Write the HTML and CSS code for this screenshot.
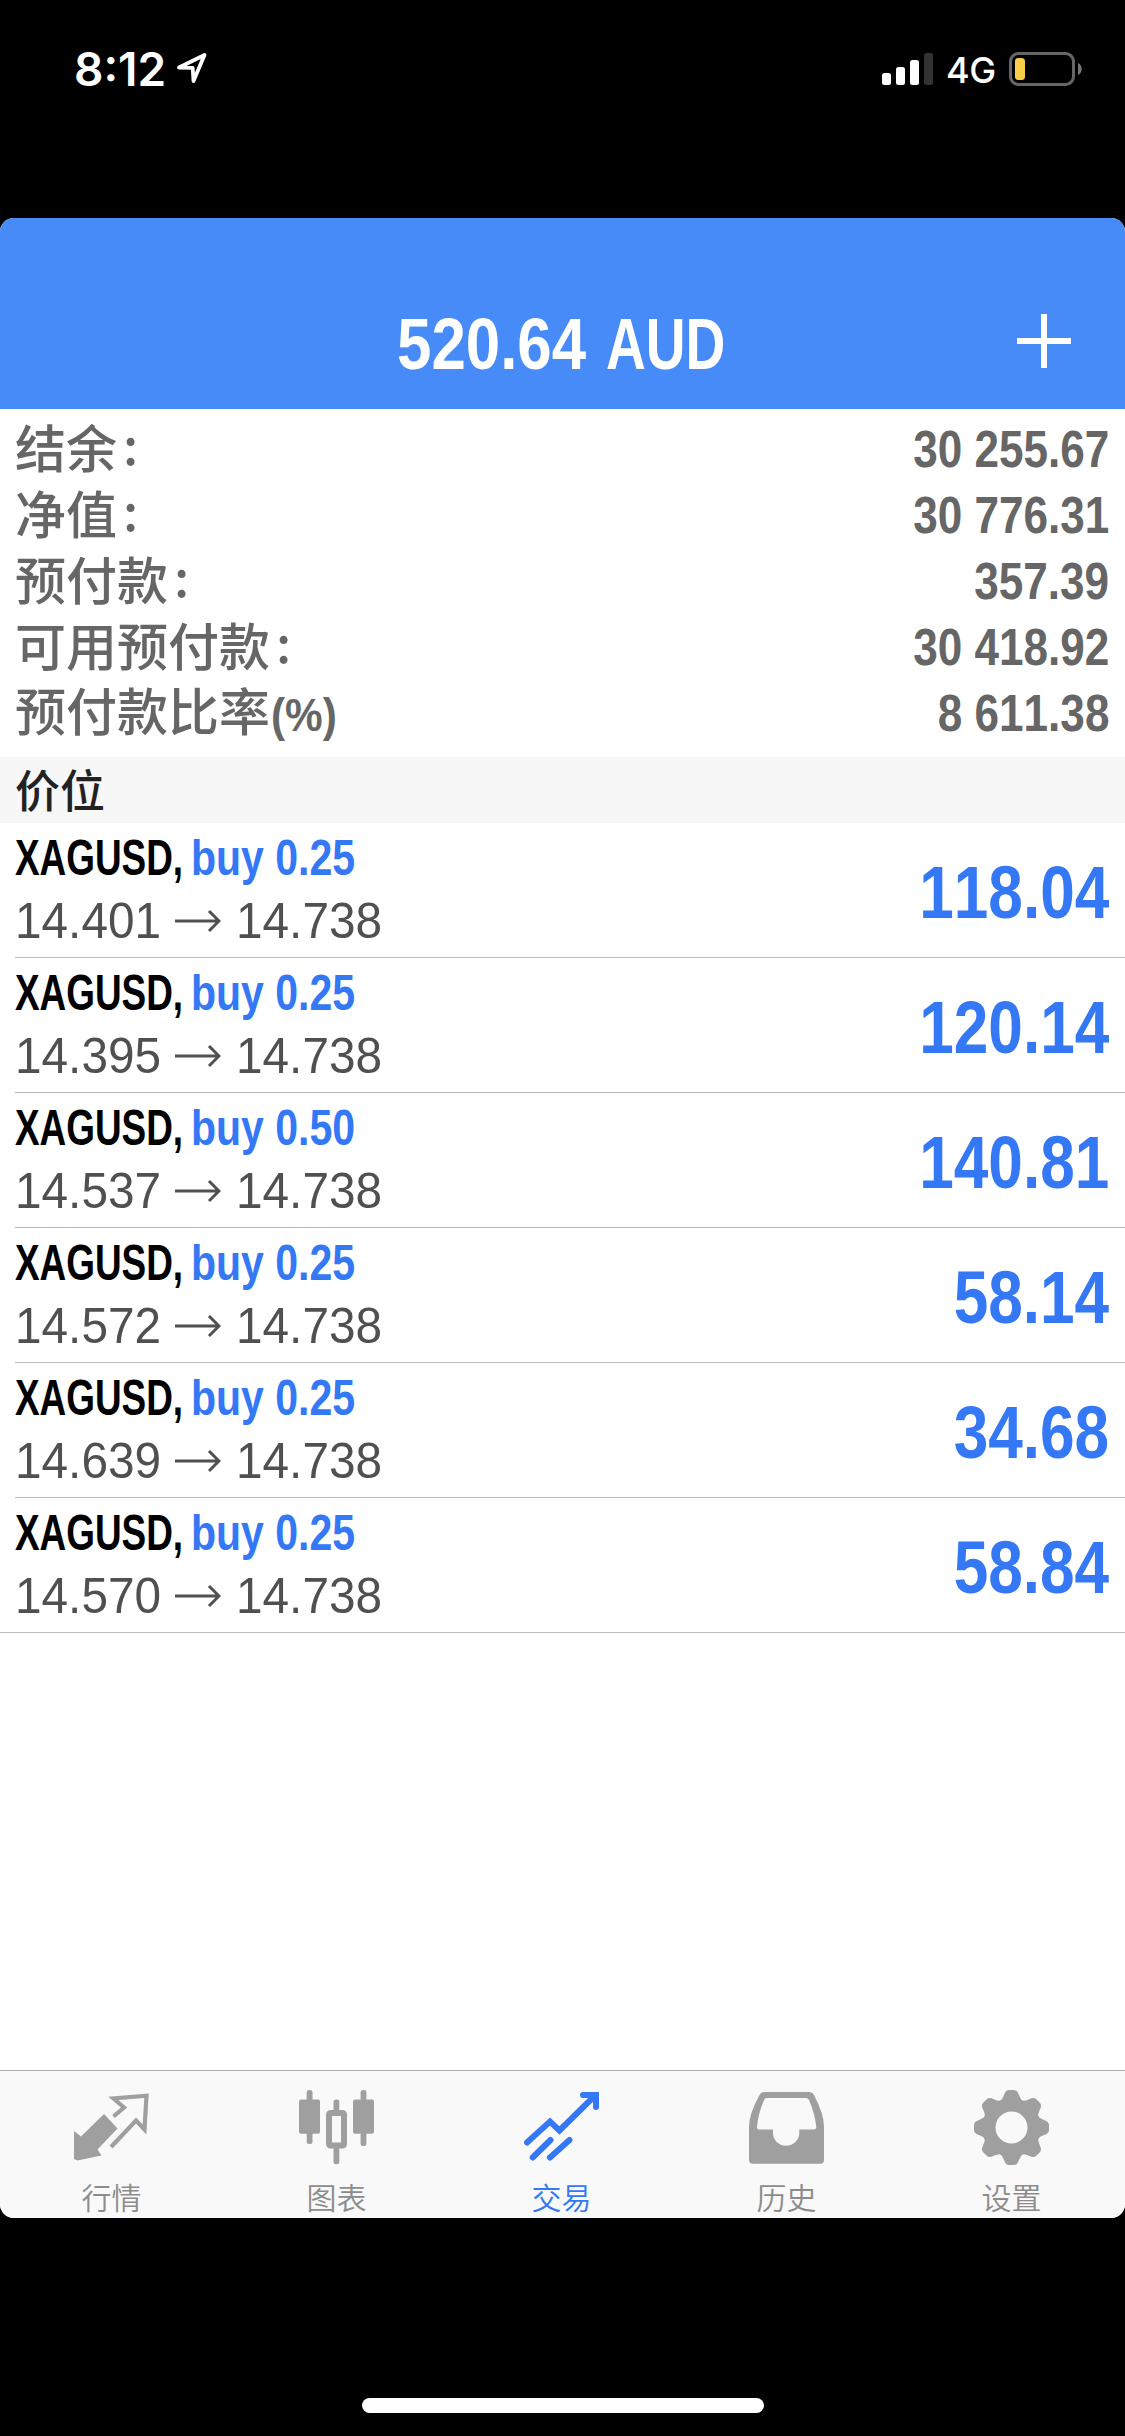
FILE: index.html
```html
<!DOCTYPE html>
<html lang="zh-CN">
<head>
<meta charset="utf-8">
<title>交易</title>
<link rel="stylesheet" href="styles.css">
</head>
<body>
<div class="status">
  <span class="time">8:12</span>
  <svg class="locate" width="32" height="32" viewBox="0 0 32 32"><path d="M3 15.500 28.500 3 17.500 29 16.700 15.800Z" fill="none" stroke="#fff" stroke-width="3.8" stroke-linejoin="round"/></svg>
  <svg class="signal" width="52" height="34" viewBox="0 0 52 34"><rect x="0" y="21" width="9" height="12" rx="2.5" fill="#fff"/><rect x="14" y="15" width="9" height="18" rx="2.5" fill="#fff"/><rect x="28" y="8" width="9" height="25" rx="2.5" fill="#fff"/><rect x="42" y="1" width="9" height="32" rx="2.5" fill="#333"/></svg>
  <span class="net">4G</span>
  <svg class="battery" width="74" height="34" viewBox="0 0 74 34"><rect x="1.5" y="1.5" width="63" height="31" rx="8" fill="none" stroke="#666" stroke-width="3"/><rect x="6" y="6" width="10" height="22" rx="3.5" fill="#f9cf4a"/><path d="M69 11c5 2 5 10 0 12z" fill="#777"/></svg>
</div>
<div class="app">
  <header class="header">
    <h1 class="title"><span class="amount cond">520.64</span> <span class="currency cond">AUD</span></h1>
    <svg class="plus" width="54" height="54" viewBox="0 0 54 54"><path d="M0 27H54M27 0V54" stroke="#fff" stroke-width="6"/></svg>
  </header>
  <dl class="account">
    <div class="line"><dt>结余<span class="colon">:</span></dt><dd class="cond">30 255.67</dd></div>
    <div class="line"><dt>净值<span class="colon">:</span></dt><dd class="cond">30 776.31</dd></div>
    <div class="line"><dt>预付款<span class="colon">:</span></dt><dd class="cond">357.39</dd></div>
    <div class="line"><dt>可用预付款<span class="colon">:</span></dt><dd class="cond">30 418.92</dd></div>
    <div class="line"><dt>预付款比率<span class="pct">(%)</span></dt><dd class="cond">8 611.38</dd></div>
  </dl>
  <h2 class="section">价位</h2>
  <ul class="list">
    <li class="row"><div class="deal"><div class="name"><span class="symbol cond">XAGUSD,</span><span class="side cond">buy 0.25</span></div><div class="price"><span>14.401</span><svg width="46" height="24" viewBox="0 0 46 24"><path d="M0 12H44M34 2 44 12 34 22"/></svg><span>14.738</span></div></div><div class="profit cond">118.04</div></li>
    <li class="row"><div class="deal"><div class="name"><span class="symbol cond">XAGUSD,</span><span class="side cond">buy 0.25</span></div><div class="price"><span>14.395</span><svg width="46" height="24" viewBox="0 0 46 24"><path d="M0 12H44M34 2 44 12 34 22"/></svg><span>14.738</span></div></div><div class="profit cond">120.14</div></li>
    <li class="row"><div class="deal"><div class="name"><span class="symbol cond">XAGUSD,</span><span class="side cond">buy 0.50</span></div><div class="price"><span>14.537</span><svg width="46" height="24" viewBox="0 0 46 24"><path d="M0 12H44M34 2 44 12 34 22"/></svg><span>14.738</span></div></div><div class="profit cond">140.81</div></li>
    <li class="row"><div class="deal"><div class="name"><span class="symbol cond">XAGUSD,</span><span class="side cond">buy 0.25</span></div><div class="price"><span>14.572</span><svg width="46" height="24" viewBox="0 0 46 24"><path d="M0 12H44M34 2 44 12 34 22"/></svg><span>14.738</span></div></div><div class="profit cond">58.14</div></li>
    <li class="row"><div class="deal"><div class="name"><span class="symbol cond">XAGUSD,</span><span class="side cond">buy 0.25</span></div><div class="price"><span>14.639</span><svg width="46" height="24" viewBox="0 0 46 24"><path d="M0 12H44M34 2 44 12 34 22"/></svg><span>14.738</span></div></div><div class="profit cond">34.68</div></li>
    <li class="row"><div class="deal"><div class="name"><span class="symbol cond">XAGUSD,</span><span class="side cond">buy 0.25</span></div><div class="price"><span>14.570</span><svg width="46" height="24" viewBox="0 0 46 24"><path d="M0 12H44M34 2 44 12 34 22"/></svg><span>14.738</span></div></div><div class="profit cond">58.84</div></li>
  </ul>
  <nav class="tabs">
    <a class="tab"><svg width="75" height="75" viewBox="0 0 75 75"><path d="M30 24 43.5 38.5 23.5 59.5 27.5 65.5 3.5 70.5 0 69V41L7 46.5Z" fill="currentColor"/><path d="M39.5 26.500 50 17.500 39.500 8.500 72.500 5.700 70.500 39.500 62 30.500 37 57" fill="none" stroke="currentColor" stroke-width="4.2"/></svg><span>行情</span></a>
    <a class="tab"><svg width="75" height="75" viewBox="0 0 75 75" fill="currentColor"><rect x="7.7" y="0" width="5.8" height="54" rx="2.5"/><rect x="0" y="9.5" width="21" height="34.3" rx="2"/><rect x="34.5" y="9.5" width="5.8" height="14" rx="2.5"/><rect x="34.5" y="57" width="5.8" height="17.3" rx="2.5"/><rect x="30" y="23" width="15" height="32.5" rx="1.5" fill="none" stroke="currentColor" stroke-width="6"/><rect x="61.6" y="0" width="5.8" height="56" rx="2.5"/><rect x="54" y="9.5" width="21" height="34.3" rx="2"/></svg><span>图表</span></a>
    <a class="tab active"><svg width="75" height="75" viewBox="0 0 75 75" fill="none" stroke="currentColor" stroke-width="6" stroke-linecap="round"><path d="M3 52.500 26 31.500 35.500 40.500 71 5.500M59 5H72V17M8.700 67.500 26.500 50M26 67.500 45.500 50"/></svg><span>交易</span></a>
    <a class="tab"><svg width="75" height="75" viewBox="0 0 75 75"><path fill="currentColor" fill-rule="evenodd" d="M15.500 2H60Q63.500 2 65 5 75 24 75 37V70Q75 73.700 71.300 73.700H3.700Q0 73.700 0 70V37Q0 24 10.500 5 12 2 15.500 2ZM18 8Q15.700 8 15 10 9 24 8 37 7.800 39.500 10 39.500H24V43C24 50 29.500 55.700 37 55.700S50.300 50 50.300 43V39.500H65Q67.500 39.500 67.300 37 66 24 60 10 59 8 57 8Z"/></svg><span>历史</span></a>
    <a class="tab"><svg width="75" height="75" viewBox="0 0 75 75" fill="currentColor"><defs><path id="tooth" d="M25 12Q29 9 30 5 31.500 0 35 0H40Q43.500 0 45 5 46 9 50 12Z"/></defs><circle cx="37.500" cy="37.500" r="22.500" fill="none" stroke="currentColor" stroke-width="13"/><use href="#tooth"/><use href="#tooth" transform="rotate(45 37.500 37.500)"/><use href="#tooth" transform="rotate(90 37.500 37.500)"/><use href="#tooth" transform="rotate(135 37.500 37.500)"/><use href="#tooth" transform="rotate(180 37.500 37.500)"/><use href="#tooth" transform="rotate(225 37.500 37.500)"/><use href="#tooth" transform="rotate(270 37.500 37.500)"/><use href="#tooth" transform="rotate(315 37.500 37.500)"/></svg><span>设置</span></a>
  </nav>
</div>
<div class="home"></div>
</body>
</html>
```
FILE: styles.css
```css
* { box-sizing: border-box; }
body {
  margin: 0;
  width: 1125px;
  height: 2436px;
  background: #000;
  display: flex;
  flex-direction: column;
  align-items: center;
  overflow: hidden;
  font-family: "Liberation Sans", "Noto Sans CJK SC", sans-serif;
}
h1, h2, dl, dd, ul { margin: 0; padding: 0; }
svg { display: block; flex: none; }
.status {
  width: 100%;
  height: 218px;
  padding: 52px 42px 0 74px;
  display: flex;
  align-items: flex-start;
  color: #fff;
  font-family: Inter, sans-serif;
}
.status span { line-height: 34px; white-space: nowrap; }
.time { font-size: 46px; font-weight: 600; width: 102px; letter-spacing: 0; }
.signal { margin-left: auto; }
.net { font-size: 36px; font-weight: 450; width: 63px; margin-left: 12px; padding-top: 1px; letter-spacing: -0.5px; }
.app {
  width: 100%;
  height: 2000px;
  background: #fff;
  border-radius: 14px;
  display: flex;
  flex-direction: column;
}
/* Condensed bold numerals and symbols */
.cond { display: inline-block; font-weight: 700; white-space: pre; font-kerning: none; }
.header {
  height: 191px;
  flex: none;
  background: #468bf7;
  border-radius: 14px 14px 0 0;
  display: grid;
  grid-template-columns: 1fr auto 1fr;
  color: #fff;
}
.title { grid-column: 2; display: flex; font-size: 73px; line-height: 84px; padding: 84px 3px 0 0; }
.title .cond { transform-origin: left; }
.amount { width: 209px; transform: scaleX(0.847); }
.currency { width: 119px; transform: scaleX(0.755); }
.plus { justify-self: end; margin: 96px 54px 0 0; }
.account { height: 348px; flex: none; padding: 6px 16px 0 15px; color: #666; }
.line { height: 66px; display: flex; justify-content: space-between; line-height: 68px; }
.line dt { font-family: "Noto Sans CJK SC", sans-serif; font-weight: 500; font-size: 51px; line-height: 60px; height: 66px; }
.line dd { font-size: 52px; transform: scaleX(0.848); transform-origin: right; }
.colon { margin-left: 6px; display: inline-block; line-height: 56px; vertical-align: 3px; }
.pct {
  display: inline-block;
  font: 700 47px/56px "Liberation Sans", sans-serif;
  transform: scaleX(0.9);
  transform-origin: left;
  margin-left: 1px;
}
.section {
  height: 66px;
  flex: none;
  padding-left: 15px;
  background: #f7f7f7;
  color: #222;
  font: 500 45px/64px "Noto Sans CJK SC", sans-serif;
}
.list { list-style: none; flex: 1; }
.row {
  height: 135px;
  margin-left: 15px;
  padding-right: 16px;
  border-bottom: 1px solid #bcbcbe;
  display: flex;
  justify-content: space-between;
}
.row:last-child { margin-left: 0; padding-left: 15px; }
.deal { padding-top: 5px; }
.name { display: flex; font-size: 50px; line-height: 60px; }
.symbol { width: 176px; transform: scaleX(0.738); transform-origin: left; }
.side { color: #3478f6; transform: scaleX(0.82); transform-origin: left; }
.price { display: flex; align-items: center; font-size: 50px; line-height: 66px; color: #505050; }
.price span { width: 145px; transform: scaleX(0.955); transform-origin: left; }
.price svg { margin: 0 15px 0 15px; fill: none; stroke: #505050; stroke-width: 3; }
.profit { font-size: 74px; line-height: 139px; color: #3478f6; transform: scaleX(0.84); transform-origin: right; }
.tabs {
  height: 148px;
  flex: none;
  border-top: 1px solid #adadad;
  border-radius: 0 0 14px 14px;
  background: #f9f9f9;
  display: grid;
  grid-template-columns: repeat(5, 225px);
}
.tab {
  display: flex;
  flex-direction: column;
  align-items: center;
  padding: 19px 2px 0 0;
  color: #9f9f9f;
}
.tab span { font: 350 30px/44px "Noto Sans CJK SC", sans-serif; margin-top: 9px; color: #8c8c8c; }
.tab.active, .tab.active span { color: #3478f6; }
.home { width: 402px; height: 15px; margin-top: 180px; border-radius: 8px; background: #fff; }
```
